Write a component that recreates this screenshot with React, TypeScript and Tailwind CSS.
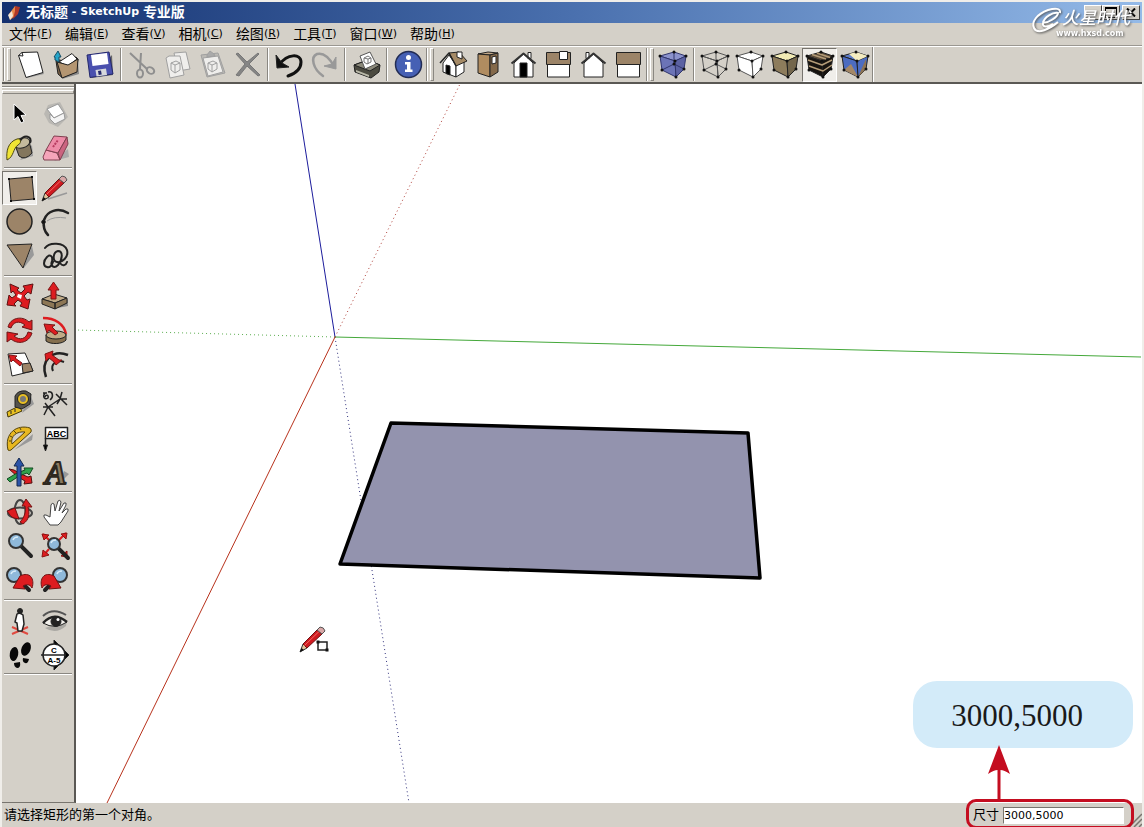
import type { ReactNode } from 'react';

type Tool = { name: string; icon: ReactNode; active?: boolean };

const BROWN = '#9c8468';
const RED = '#dd1c20';

const menus = [
  { label: '文件', hotkey: 'F' },
  { label: '编辑', hotkey: 'E' },
  { label: '查看', hotkey: 'V' },
  { label: '相机', hotkey: 'C' },
  { label: '绘图', hotkey: 'R' },
  { label: '工具', hotkey: 'T' },
  { label: '窗口', hotkey: 'W' },
  { label: '帮助', hotkey: 'H' },
];

function Icon({ children }: { children: ReactNode }) {
  return (
    <svg viewBox="0 0 30 30" className="size-[30px] shrink-0 overflow-visible" fill="none" stroke="#222" strokeWidth="1" strokeLinejoin="round" aria-hidden="true">
      {children}
    </svg>
  );
}

// The six display styles all share the same cube corners
function Cube({ top = 'none', left = 'none', right = 'none', back = false, line = '#222', children }: {
  top?: string; left?: string; right?: string; back?: boolean; line?: string; children?: ReactNode;
}) {
  return (
    <Icon>
      <path d="M2 6L16 2L28 6L17 11Z" fill={top} stroke={line} />
      <path d="M2 6L17 11L18 27L4 20Z" fill={left} stroke={line} />
      <path d="M28 6L17 11L18 27L26 19Z" fill={right} stroke={line} />
      {back && <path d="M16 2V14L4 20M16 14L26 19" stroke={line} />}
      {children}
      {[[2, 6], [16, 2], [28, 6], [17, 11], [4, 20], [18, 27], [26, 19]].map(([x, y]) => (
        <circle key={`${x}-${y}`} cx={x} cy={y} r="1.5" fill="#111" stroke="none" />
      ))}
      {back && <circle cx="16" cy="14" r="1.5" fill="#111" stroke="none" />}
    </Icon>
  );
}

function House({ chimney, door }: { chimney: number; door?: boolean }) {
  return (
    <Icon>
      <path d="M6 13L15.500 4L25 13V27H6Z" fill="#fff" />
      <rect x={chimney} y="2.500" width="3" height="6" fill="#fff" />
      {door && <rect x="12" y="13" width="7" height="14" fill="#000" />}
      <path d="M3.500 13.500L15.500 3.500L27.500 13.500" strokeWidth="2" stroke="#333" />
    </Icon>
  );
}

function Lens({ cx = 11, cy = 10, r = 7, flip = false }: { cx?: number; cy?: number; r?: number; flip?: boolean }) {
  const dir = flip ? -1 : 1;
  return (
    <>
      <path d={`M${cx + dir * r * 0.7} ${cy + r * 0.7}L${cx + dir * (r + 8)} ${cy + r + 8}`} stroke="#222" strokeWidth="4" strokeLinecap="round" />
      <circle cx={cx} cy={cy} r={r} fill="#8fb9da" stroke="#333" strokeWidth="2" />
      <path d={`M${cx - 3} ${cy - 1}Q${cx - 2} ${cy - 4} ${cx + 2} ${cy - 4}`} stroke="#d8ecf8" strokeWidth="1.500" />
    </>
  );
}

function Pencil() {
  return (
    <>
      <path d="M2 28L5 20L9 24Z" fill="#e2c49a" stroke="#333" />
      <path d="M2 28L3.500 24L6 26Z" fill="#111" stroke="none" />
      <path d="M5 20L19 6L24 10L9 24Z" fill="#cf1a20" stroke="#6c1012" />
      <path d="M6.500 21.500L21 7.500" stroke="#f26a64" />
      <path d="M19 6L22 3Q26 3 27 7L24 10Z" fill="#d9a8a8" stroke="#555" />
    </>
  );
}

const fileTools: Tool[] = [
  {
    name: '新建',
    icon: (
      <Icon>
        <path d="M5 7L12 28L29 24L27 20Z" fill="#999" stroke="none" />
        <path d="M3.500 5.500L7 2.500L22.500 2L28 22.500L11 27.500Z" fill="#fff" />
        <path d="M3.500 5.500L8 6L7 2.500" />
      </Icon>
    ),
  },
  {
    name: '打开',
    icon: (
      <Icon>
        <path d="M12 29L29 24L28 12Z" fill="#888" stroke="none" />
        <path d="M6 11L9 10L15 11L26 7L28 9L26 22L12 27.500L8 24Z" fill="#7b6248" />
        <path d="M9 12L22 3.500L27 9L18 16Z" fill="#fff" />
        <path d="M7 12L18 15L28 9L27 22L12 28Z" fill="#b49672" />
        <path d="M4 7L8 1L11 7H9V12L5 10V7Z" fill="#27a5c8" stroke="#174d66" />
      </Icon>
    ),
  },
  {
    name: '保存',
    icon: (
      <Icon>
        <path d="M6 28L28 25L27 5Z" fill="#666" stroke="none" />
        <path d="M2 5L24 2L28 24L5 27.500Z" fill="#4a50ae" stroke="#24286c" />
        <path d="M6 5L22 3L23.500 14L7.500 16Z" fill="#fff" stroke="none" />
        <path d="M10.500 20L21 18.500L22 25L11.500 26.500Z" fill="#d6d8dc" stroke="none" />
        <path d="M13 21L16 20.500L16.700 24.500L13.700 25Z" fill="#24286c" stroke="none" />
      </Icon>
    ),
  },
];

const editTools: Tool[] = [
  {
    name: '剪切',
    icon: (
      <Icon>
        <g stroke="#8f8f8f" strokeWidth="2">
          <path d="M3 3L20 19M14 3L13 19" />
          <ellipse cx="13" cy="23.500" rx="3" ry="4" />
          <ellipse cx="23.500" cy="20.500" rx="4" ry="3" transform="rotate(35 23.500 20.500)" />
        </g>
      </Icon>
    ),
  },
  {
    name: '复制',
    icon: (
      <Icon>
        <g stroke="#a0a0a0" fill="#efeeec">
          <path d="M12 3L24 2L28 19L16 21Z" />
          <path d="M4 8L7 6L18 6L22 25L8 28Z" />
          <path d="M9 13L14 11L18 13L18 20L13 23L9 20ZM9 13L13 15L18 13M13 15V23" />
        </g>
      </Icon>
    ),
  },
  {
    name: '粘贴',
    icon: (
      <Icon>
        <g stroke="#a0a0a0" fill="#efeeec">
          <path d="M4 5L21 3L28 23L10 27Z" fill="#bcbab5" />
          <path d="M6 8L21 6L26 22L11 26Z" />
          <path d="M10 5L13 1L17 4L18 6L10 7Z" fill="#aaa" />
          <path d="M11 13L16 11L20 13L20 19L15 22L11 19ZM11 13L15 15L20 13M15 15V22" />
        </g>
      </Icon>
    ),
  },
  {
    name: '删除',
    icon: (
      <Icon>
        <path d="M4 4L6 3L15 12L26 3L27 4L17 14L28 25L26 26L15 16L7 26L4 25L13 14Z" fill="#858585" stroke="#777" />
      </Icon>
    ),
  },
];

const historyTools: Tool[] = [
  {
    name: '撤销',
    icon: (
      <Icon>
        <path d="M6 14C13 4 27 3 27 12C27 20 20 24 14 26" stroke="#111" strokeWidth="3" strokeLinecap="round" />
        <path d="M2 5L3 18L15 17L8 13Z" fill="#111" />
      </Icon>
    ),
  },
  {
    name: '重做',
    icon: (
      <Icon>
        <path d="M14 26C4 19 1 7 8 4C15 2 21 9 25 16" stroke="#999" strokeWidth="2.500" strokeLinecap="round" />
        <path d="M27 7L27 19L15 16L23 14Z" fill="#999" stroke="#999" />
      </Icon>
    ),
  },
];

const printTools: Tool[] = [
  {
    name: '打印',
    icon: (
      <Icon>
        <path d="M3 15L17 10L29 15L28 22L20 28L4 22Z" fill="#4b4a40" />
        <path d="M3 15L17 10L29 15L19 21Z" fill="#8b897a" />
        <path d="M9 6L19 2L25 14L14 19Z" fill="#fff" stroke="#555" />
        <path d="M13 8L17 6L20 8L20 12L16 14L13 12ZM13 8L17 9L20 8M17 9V14" stroke="#777" />
        <path d="M5 20L18 25V27L5 22Z" fill="#b9b8a8" stroke="none" />
      </Icon>
    ),
  },
];

const infoTools: Tool[] = [
  {
    name: '模型信息',
    icon: (
      <Icon>
        <circle cx="15.500" cy="14.500" r="13" fill="#4660b4" stroke="#222c54" strokeWidth="1.500" />
        <circle cx="15.500" cy="7.500" r="2.500" fill="#fff" stroke="none" />
        <path d="M12 12H17.500V19.500H19.500V22H12V19.500H14V14.500H12Z" fill="#fff" stroke="none" />
      </Icon>
    ),
  },
];

const viewTools: Tool[] = [
  {
    name: '等轴视图',
    icon: (
      <Icon>
        <path d="M5 13L11 5L18 15V27L5 22Z" fill="#fff" />
        <path d="M18 15L26 11V22L18 27Z" fill="#fff" />
        <path d="M8 15L12 16V25L8 23.500Z" fill="#000" />
        <path d="M11 3L21 2L29 11L18 16Z" fill="#a58a66" />
        <path d="M2 13L11 3L18 16" strokeWidth="1.500" />
        <path d="M19 2H24V9L19 7Z" fill="#fff" />
      </Icon>
    ),
  },
  {
    name: '俯视图',
    icon: (
      <Icon>
        <path d="M5 4L15 2L25 3L17 5Z" fill="#c2a888" />
        <path d="M5 4L17 5V27L5 23Z" fill="#b08c60" />
        <path d="M17 5L25 3V22L17 27Z" fill="#84694a" />
        <path d="M19 7L23 6V13L19 14Z" fill="#fff" />
      </Icon>
    ),
  },
  { name: '前视图', icon: <House chimney={20} door /> },
  {
    name: '右视图',
    icon: (
      <Icon>
        <rect x="4.500" y="14" width="22" height="13" fill="#fff" />
        <rect x="3.500" y="2.500" width="24" height="12" fill={BROWN} />
        <rect x="16.500" y="1.500" width="8" height="8" fill="#fff" />
      </Icon>
    ),
  },
  { name: '后视图', icon: <House chimney={8} /> },
  {
    name: '左视图',
    icon: (
      <Icon>
        <rect x="4.500" y="14" width="22" height="13" fill="#fff" />
        <rect x="3.500" y="2.500" width="24" height="12" fill={BROWN} />
      </Icon>
    ),
  },
];

const xrayTools: Tool[] = [
  { name: 'X光模式', icon: <Cube top="#8b92cc" left="#6c74b6" right="#5c62a2" back line="#31366e" /> },
];

const styleTools: Tool[] = [
  { name: '线框', icon: <Cube back line="#555" /> },
  { name: '消隐', icon: <Cube top="#fff" left="#fff" right="#fff" line="#555" /> },
  { name: '着色', icon: <Cube top="#f1eab4" left="#8d7c5c" right="#73664c" /> },
  {
    name: '材质贴图',
    active: true,
    icon: (
      <Cube top="#5a4a38" left="#17130f" right="#17130f">
        <path d="M3 10L17 15L27 10M4 16L18 21L27 15M7 4.500L21 9M12 3L25 7.500" stroke="#b49c78" strokeWidth="1.500" />
      </Cube>
    ),
  },
  {
    name: '单色',
    icon: (
      <Cube top="#5e7cc8" left="#4c6cc0" right="#4c6cc0">
        <path d="M9 4L16 2L28 6L17 11Z" fill="#f4ecc0" stroke="none" />
        <path d="M4 20L11 14L18 27Z" fill="#a38766" stroke="none" />
        <path d="M18 27L26 9V19Z" fill="#8c7353" stroke="none" />
      </Cube>
    ),
  },
];

const paletteGroups: Tool[][] = [
  [
    {
      name: '选择',
      icon: (
        <Icon>
          <path d="M9 5V21L13 17.500L16 24L19 22.500L16 16.500L21 16Z" fill="#000" stroke="#fff" />
        </Icon>
      ),
    },
    {
      name: '制作组件',
      icon: (
        <Icon>
          <path d="M4 15L8 6L20 3L28 18L18 28L9 24Z" fill="#bab8b3" stroke="none" />
          <path d="M7 10L18 5L24 14L14 19Z" fill="#fff" stroke="#999" />
          <path d="M14 19L24 14L25 20L15 25L10 20V15Z" fill="#f4f4f4" stroke="#999" />
        </Icon>
      ),
    },
    {
      name: '材质',
      icon: (
        <Icon>
          <path d="M15 27L28 23L27 12Z" fill="#999" stroke="none" />
          <path d="M10 12L14 23Q20 28 27 20L24 8Z" fill="#83765d" />
          <ellipse cx="17" cy="10" rx="8" ry="5" fill="#c4ba9c" transform="rotate(-15 17 10)" />
          <path d="M15 8C19 1 28 3 25 10" strokeWidth="2" />
          <path d="M2 27C1 18 3 9 12 6C16 5 17 10 13 12C8 15 9 24 2 27Z" fill="#f0e434" stroke="#4e4814" />
        </Icon>
      ),
    },
    {
      name: '擦除',
      icon: (
        <Icon>
          <path d="M14 28L29 24L28 16Z" fill="#aaa" stroke="none" />
          <path d="M3 24L6 17L17 20L20 27L4 27Z" fill="#f5a5ba" stroke="#804050" />
          <path d="M6 17L14 3L27 4L18 20Z" fill="#ee8ca8" stroke="#804050" />
          <path d="M18 20L27 4L28 11L20 27Z" fill="#cb6480" stroke="#804050" />
          <path d="M13 14L18 7" stroke="#b83c60" strokeWidth="2" strokeDasharray="2 1" />
        </Icon>
      ),
    },
  ],
  [
    {
      name: '矩形',
      active: true,
      icon: (
        <Icon>
          <path d="M4 6L27 4L29 26L6 28Z" fill={BROWN} />
          <path d="M3 5h2v2H3zM26 3h2v2h-2zM28 25h2v2h-2zM5 27h2v2H5z" fill="#111" stroke="none" />
        </Icon>
      ),
    },
    {
      name: '直线',
      icon: (
        <Icon>
          <path d="M8 26L27 20" stroke="#999" strokeWidth="1.500" />
          <Pencil />
        </Icon>
      ),
    },
    { name: '圆', icon: <Icon><circle cx="14.500" cy="14.500" r="12.500" fill={BROWN} strokeWidth="1.500" /></Icon> },
    {
      name: '圆弧',
      icon: (
        <Icon>
          <path d="M7 14Q14 9 26 11" stroke="#999" />
          <path d="M28 6C18 0 7 4 4 13C3 19 4 24 8 28" strokeWidth="2.500" strokeLinecap="round" />
          <circle cx="3.500" cy="15" r="1.800" fill="#111" />
        </Icon>
      ),
    },
    {
      name: '多边形',
      icon: (
        <Icon>
          <path d="M18 28L29 14L27 5Z" fill="#999" stroke="none" />
          <path d="M2 4L27 3L18 27Z" fill={BROWN} />
        </Icon>
      ),
    },
    {
      name: '徒手画',
      icon: (
        <Icon>
          <path d="M5 7C9 1 24 1 27 9C29 16 22 22 17 21C12 20 13 11 18 10C23 10 23 18 18 24C14 28 10 25 12 20C13 15 10 13 7 16C3 20 3 25 7 26C10 27 12 24 13 21M20 22C23 26 26 24 27 21" strokeWidth="2" strokeLinecap="round" />
        </Icon>
      ),
    },
  ],
  [
    {
      name: '移动/复制',
      icon: (
        <Icon>
          <path d="M5 3L14 7L12 9L16 12L20 8L18 5L28 3L26 13L23 11L19 15L22 19L25 18L23 28L15 25L17 22L13 19L9 23L11 25L2 24L4 14L7 17L11 14L8 10L6 12Z" fill={RED} stroke="#5d1212" />
          <path d="M13 13L17 14L16 18L12 16Z" fill="#fff" stroke="none" />
        </Icon>
      ),
    },
    {
      name: '推/拉',
      icon: (
        <Icon>
          <path d="M12 28L28 25V18Z" fill="#888" stroke="none" />
          <path d="M2 18L14 13L27 17L15 22Z" fill="#c0aa86" />
          <path d="M2 18L15 22V28L2 23ZM15 22L27 17V22L15 28Z" fill="#8d7756" />
          <path d="M11 18V9H8L13.500 1L19 9H16V18Z" fill={RED} stroke="#7d1414" />
        </Icon>
      ),
    },
    {
      name: '旋转',
      icon: (
        <Icon>
          <path d="M3 12C5 3 17 0 24 7L27 5V15L17 12L20 10C14 5 8 7 6 13Z" fill={RED} stroke="#6b1616" />
          <path d="M27 18C24 28 13 30 6 24L2 27V17L13 19L9 21C15 26 21 24 23 17Z" fill={RED} stroke="#6b1616" />
        </Icon>
      ),
    },
    {
      name: '路径跟随',
      icon: (
        <Icon>
          <path d="M3 3C15 3 24 9 26 19" stroke={RED} strokeWidth="2.500" />
          <path d="M6 20V26C11 30 23 29 26 25V19Z" fill="#86704f" />
          <ellipse cx="16" cy="20" rx="10" ry="4" fill="#c0aa86" />
          <path d="M4 9L15 10L12 12L18 18L15 20L9 15L7 18Z" fill={RED} stroke="#7d1414" />
        </Icon>
      ),
    },
    {
      name: '缩放',
      icon: (
        <Icon>
          <path d="M3 5L20 4L28 22L7 27Z" fill="#fff" />
          <path d="M17 15L25 14L28 22L18 24Z" fill={BROWN} />
          <path d="M4 6L12 7L10 9L17 14L15 17L8 11L6 13Z" fill={RED} stroke="#7d1414" />
        </Icon>
      ),
    },
    {
      name: '偏移复制',
      icon: (
        <Icon>
          <path d="M28 6C13 0 0 11 6 28" strokeWidth="2.500" />
          <path d="M24 13C17 10 10 15 13 22" strokeWidth="2" />
          <path d="M5 5L13 2L12 6L19 11H22L16 16L14 13L9 9L6 12Z" fill={RED} stroke="#7d1414" />
        </Icon>
      ),
    },
  ],
  [
    {
      name: '测量',
      icon: (
        <Icon>
          <path d="M17 24L29 15L25 5Z" fill="#999" stroke="none" />
          <path d="M2 23L14 17L17 22L3 28Z" fill="#e8c020" stroke="#443808" />
          <path d="M6 22V25M10 20V23" />
          <path d="M10 7Q13 1 21 2L26 5L25 15L17 20L10 18Z" fill="#55534c" />
          <circle cx="18" cy="10" r="5.500" fill="#e8bf24" />
          <circle cx="18" cy="10" r="3" fill="#777" stroke="none" />
        </Icon>
      ),
    },
    {
      name: '尺寸标注',
      icon: (
        <Icon>
          <path d="M8 18L20 10M3 18H13M5 14L15 27M8 18L4 26M16 5L27 16M20 10H27M20 10L22 3M20 10L17 15" strokeWidth="1.500" />
          <path d="M3 4H7M5 4C2 8 5 11 8 9C9 6 6 5 5 8M8 3C13 2 14 8 10 11" strokeWidth="1.500" />
        </Icon>
      ),
    },
    {
      name: '量角器',
      icon: (
        <Icon>
          <path d="M9 27L28 11L27 17Z" fill="#999" stroke="none" />
          <path d="M3 27C-1 10 12 1 25 5Q27 7 26 9L6 27Q4 28 3 27Z" fill="#e8b820" stroke="#54430c" />
          <path d="M7 21C5 13 12 8 20 9Z" fill="#d4d0c8" stroke="#54430c" />
          <path d="M4 18H6M5 13L7 14M9 8L11 10M15 5L16 7" stroke="#54430c" />
        </Icon>
      ),
    },
    {
      name: '文字',
      icon: (
        <Icon>
          <rect x="5.500" y="4.500" width="22" height="11" fill="#fff" strokeWidth="1.500" />
          <text x="16.500" y="13.500" textAnchor="middle" fontFamily="Liberation Sans, sans-serif" fontWeight="bold" fontSize="9" fill="#000" stroke="none">ABC</text>
          <path d="M5.500 15V26" strokeWidth="1.500" />
          <path d="M3.500 22L5.500 28L7.500 22Z" fill="#000" />
        </Icon>
      ),
    },
    {
      name: '坐标轴',
      icon: (
        <Icon>
          <path d="M4 12L9 13L16 17L23 20L26 19L27 26L19 27L20 24L13 20Z" fill={RED} stroke="#521010" />
          <path d="M2 22L12 16L20 13L19 11L28 11L24 18L22 16L14 19L5 25Z" fill="#30a14c" stroke="#124c20" />
          <path d="M12 29V9H9L14 1L19 9H16V29Z" fill="#2c54a8" stroke="#14284e" />
        </Icon>
      ),
    },
    {
      name: '三维文字',
      icon: (
        <Icon>
          <path d="M20 26L29 17L24 14Z" fill="#999" stroke="none" />
          <g fontFamily="Liberation Serif, serif" fontWeight="bold" fontStyle="italic" fontSize="33" textAnchor="middle">
            <text x="16" y="27" fill="#8c7c60" stroke="#2e2820" strokeWidth="2">A</text>
          </g>
        </Icon>
      ),
    },
  ],
  [
    {
      name: '转动',
      icon: (
        <Icon>
          <ellipse cx="15" cy="16" rx="12" ry="5.500" stroke="#444" strokeWidth="2" />
          <ellipse cx="15" cy="15" rx="5.500" ry="12" stroke="#444" strokeWidth="2" />
          <path d="M2 14L10 11L14 22L9 21C6 20 5 18 2 14Z" fill={RED} stroke="#701414" />
          <path d="M17 9L21 2L27 10H23C25 17 24 23 18 27L15 25C20 20 21 14 20 9Z" fill={RED} stroke="#701414" />
        </Icon>
      ),
    },
    {
      name: '平移',
      icon: (
        <Icon>
          <path d="M10 28L4 20Q3 17 6 18L10 20L11 8Q12 5 14 7L15 14L18 4Q20 2 21 5L19 14L24 6Q27 5 26 8L22 16L26 12Q29 11 28 14L21 25L18 28Z" fill="#fff" stroke="#444" />
        </Icon>
      ),
    },
    { name: '缩放视图', icon: <Icon><Lens /></Icon> },
    {
      name: '充满视窗',
      icon: (
        <Icon>
          <path d="M10 10L3 3M19 9L26 2M9 18L3 25" stroke={RED} strokeWidth="2" />
          <path d="M2 3L9 4L4 9ZM21 3L27 2L26 8ZM3 19L9 24L2 26ZM21 25L27 20V26Z" fill={RED} stroke="#8c1414" />
          <Lens cx={14} cy={13} r={6} />
        </Icon>
      ),
    },
    {
      name: '上一视图',
      icon: (
        <Icon>
          <Lens cx={9} cy={10} />
          <path d="M8 23L15 11C25 6 30 14 27 23C25 19 21 19 18 21L20 24Z" fill={RED} stroke="#701414" />
        </Icon>
      ),
    },
    {
      name: '下一视图',
      icon: (
        <Icon>
          <Lens cx={20} cy={10} flip />
          <path d="M21 23L14 11C4 6 -1 14 2 23C4 19 8 19 11 21L9 24Z" fill={RED} stroke="#701414" />
        </Icon>
      ),
    },
  ],
  [
    {
      name: '相机位置',
      icon: (
        <Icon>
          <path d="M7 22L23 29M7 29L23 22" stroke="#e04a40" strokeWidth="2" />
          <circle cx="15" cy="6" r="2.500" fill="#222" />
          <path d="M12 9Q15 7 18 10L19 19L17 26H13L12 18L10 17Z" fill="#fff" strokeWidth="1.500" />
        </Icon>
      ),
    },
    {
      name: '绕轴旋转',
      icon: (
        <Icon>
          <path d="M5 23Q16 30 26 21L27 16Z" fill="#aaa8a3" stroke="none" />
          <path d="M3 11Q13 2 26 10" stroke="#555" strokeWidth="2" />
          <path d="M3 18Q14 6 27 17Q15 25 3 18Z" fill="#f1efea" />
          <path d="M3 18Q14 6 27 17" strokeWidth="2.500" />
          <circle cx="16" cy="16.500" r="5" fill="#222" />
          <circle cx="18" cy="14.500" r="1.500" fill="#fff" stroke="none" />
        </Icon>
      ),
    },
    {
      name: '漫游',
      icon: (
        <Icon>
          <g fill="#080808" stroke="none">
            <ellipse cx="9" cy="15" rx="4.200" ry="7" transform="rotate(10 9 15)" />
            <path d="M9 24L15 23Q16 29 12 29Q9 28 9 24Z" />
            <ellipse cx="21" cy="10" rx="4.500" ry="7" transform="rotate(22 21 10)" />
            <path d="M18 19L24 20Q23 25 20 24Q17 23 18 19Z" />
          </g>
        </Icon>
      ),
    },
    {
      name: '剖面',
      icon: (
        <Icon>
          <path d="M14 1L29 16L14 31Z" fill="#000" />
          <circle cx="14" cy="16" r="11" fill="#fff" strokeWidth="1.500" />
          <path d="M1 16H26" strokeWidth="1.500" />
          <g fontFamily="Liberation Sans, sans-serif" fontWeight="bold" fontSize="8" fill="#000" stroke="none" textAnchor="middle">
            <text x="14" y="13.500">C</text>
            <text x="14" y="24">A-5</text>
          </g>
        </Icon>
      ),
    },
  ],
];

function ToolButton({ name, icon, active }: Tool) {
  return (
    <button
      type="button"
      aria-label={name}
      aria-pressed={active}
      className={
        active
          ? 'flex h-[34px] w-[35px] items-center justify-center border border-t-[#77746e] border-l-[#77746e] border-r-white border-b-white bg-[#f0eeea]'
          : 'flex h-[34px] w-[35px] items-center justify-center'
      }
    >
      {icon}
    </button>
  );
}

function ToolRow({ tools }: { tools: Tool[] }) {
  return <div className="flex items-end">{tools.map((tool) => <ToolButton key={tool.name} {...tool} />)}</div>;
}

function Divider() {
  return (
    <div className="flex w-[7px] shrink-0 justify-center py-px">
      <div className="w-[2px] border-l border-r border-l-[#8a8781] border-r-white" />
    </div>
  );
}

function Grip() {
  return (
    <div className="flex w-[10px] shrink-0 items-stretch justify-center gap-[2px] py-px">
      <div className="w-[2px] border-l border-r border-l-[#8a8781] border-r-white" />
      <div className="w-[4px] border border-white border-r-[#8a8781] border-b-[#8a8781]" />
    </div>
  );
}

function TitleBar() {
  return (
    <header className="relative flex h-[21px] shrink-0 items-center bg-linear-to-r from-[#14306f] via-[#4a70ae] to-[#94bae8] pl-1 pr-[2px]">
      <svg viewBox="0 0 16 16" className="size-4" aria-hidden="true">
        <path d="M3 9L9 1L12 3L8 12L4 15Z" fill="#e88848" />
        <path d="M9 1L14 2L12 9L7 14L9 6Z" fill="#b03828" />
        <path d="M2 10L6 6L7 11L4 15Z" fill="#f4e6d4" />
      </svg>
      <h1 className="ml-1 flex items-center text-[14px] font-bold whitespace-pre text-white">
        无标题<span className="text-[11px]"> - SketchUp </span>专业版
      </h1>
      <div className="ml-auto flex">
        <button type="button" aria-label="最小化" className="flex h-[15px] w-[18px] items-end justify-start border border-white border-r-[#404040] border-b-[#404040] bg-[#d4d0c8] p-[2px]">
          <span className="h-[2px] w-2 bg-black" />
        </button>
        <button type="button" aria-label="最大化" className="flex h-[15px] w-[18px] items-center justify-center border border-white border-r-[#404040] border-b-[#404040] bg-[#d4d0c8]">
          <span className="h-[11px] w-3 border border-t-2 border-black" />
        </button>
        <button type="button" aria-label="关闭" className="ml-[2px] flex h-[15px] w-[18px] items-center justify-center border border-white border-r-[#404040] border-b-[#404040] bg-[#d4d0c8]">
          <svg viewBox="0 0 10 9" className="h-[9px] w-[10px]" stroke="#000" strokeWidth="2">
            <path d="M1 0.500L9 8.500M9 0.500L1 8.500" />
          </svg>
        </button>
      </div>

      {/* Site mark over the window buttons */}
      <svg viewBox="0 0 112 32" className="absolute top-1 right-0 z-10 h-8 w-28 drop-shadow-[1px_1px_1px_#555]" aria-hidden="true">
        <path d="M30 7C31 2 25 2 18 4C7 8 1 16 4 22C7 29 20 23 28 16M13 16C17 18 28 11 28 7C23 6 14 11 13 17C12 21 17 22 23 18" fill="none" stroke="#fff" strokeWidth="2" />
        <text x="32" y="18" fontFamily="Noto Sans CJK SC, sans-serif" fontWeight="500" fontStyle="italic" fontSize="17" fill="#fff">火星时代</text>
        <text x="26" y="30" fontFamily="DejaVu Sans, sans-serif" fontWeight="bold" fontSize="8" fill="#fff">www.hxsd.com</text>
      </svg>
    </header>
  );
}

function Palette() {
  return (
    <aside className="w-[74px] shrink-0 border-r-2 border-b border-r-[#5a5854] border-b-[#77746e]">
      <div className="flex h-[13px] flex-col gap-[2px] pt-[2px]">
        <div className="h-[2px] border-t border-b border-t-[#8a8781] border-b-white" />
        <div className="h-[4px] border border-white border-r-[#8a8781] border-b-[#8a8781]" />
      </div>
      {paletteGroups.map((group) => (
        <div key={group[0].name}>
          <div className="grid grid-cols-[35px_35px]">
            {group.map((tool) => <ToolButton key={tool.name} {...tool} />)}
          </div>
          <div className="flex h-[6px] items-center px-[2px]">
            <div className="h-[2px] w-full border-t border-b border-t-[#8a8781] border-b-white" />
          </div>
        </div>
      ))}
    </aside>
  );
}

function Viewport() {
  return (
    <main className="relative min-w-0 flex-1 overflow-hidden bg-white">
      <svg viewBox="76 84 1066 719" preserveAspectRatio="xMinYMin slice" className="absolute inset-0 size-full" fill="none" aria-label="模型">
        {/* Axes, dotted on the negative side */}
        <path d="M335 337L295 84" stroke="#1c1c9c" />
        <path d="M335 337L409 803" stroke="#30307c" strokeDasharray="1 3" />
        <path d="M335 337L1141 357" stroke="#44a83a" />
        <path d="M335 337L76 330" stroke="#5cae50" strokeDasharray="1 3" />
        <path d="M335 337L107 803" stroke="#b8321c" />
        <path d="M335 337L460 84" stroke="#b04038" strokeDasharray="1 3" />
        <path d="M391 423L748 433L760 578L340 564Z" fill="#9393ae" stroke="#000" strokeWidth="3.500" strokeLinejoin="round" />
        {/* Pencil cursor with the rectangle hint */}
        <g transform="translate(298 624)">
          <Pencil />
          <path d="M20 18H29V26H20Z" stroke="#222" strokeWidth="1.500" />
          <path d="M18.500 16.500h3v3h-3zM27.500 24.500h3v3h-3z" fill="#111" />
        </g>
      </svg>
    </main>
  );
}

function StatusBar() {
  return (
    <footer className="relative flex h-6 shrink-0 items-center pr-[18px] pl-[2px] text-[13px] text-black">
      <p>请选择矩形的第一个对角。</p>
      <label htmlFor="dimensions" className="mr-1 ml-auto">尺寸</label>
      <input
        id="dimensions"
        defaultValue="3000,5000"
        className="h-[17px] w-[121px] border border-t-[#77746e] border-l-[#77746e] border-r-white border-b-white bg-white text-[11px] outline-none"
      />
      <svg viewBox="0 0 14 14" className="absolute right-0 bottom-0 size-[14px]" stroke="#77746e" strokeWidth="1.500" aria-hidden="true">
        <path d="M1 14L14 1M6 14L14 6M11 14L14 11" />
      </svg>

      {/* Note pointing at the dimension box */}
      <div className="pointer-events-none absolute -top-1 right-2 h-[30px] w-[168px] rounded-[10px] border-3 border-[#c40d20]" />
      <svg viewBox="0 0 22 56" className="absolute right-[132px] bottom-[26px] z-10 h-14 w-[22px]" fill="#c40d20" aria-hidden="true">
        <path d="M11 0L22 29Q16 25 12.500 25V56H9.500V25Q6 25 0 29Z" />
      </svg>
      <div className="absolute right-[9px] bottom-[79px] flex h-[67px] w-[220px] items-center justify-center rounded-[24px] bg-[#d3ebf9] pt-1 pr-3 font-['Liberation_Serif',serif] text-[31px] text-[#1a1a1a]">
        3000,5000
      </div>
    </footer>
  );
}

export default function App() {
  return (
    <div className="flex h-screen flex-col overflow-hidden border-x-2 border-t-2 border-[#f0eeea] bg-[#d4d0c8] font-['DejaVu_Sans','Noto_Sans_CJK_SC',sans-serif]">
      <TitleBar />

      <nav className="flex h-[22px] shrink-0 items-center gap-[13px] pl-[7px]">
        {menus.map(({ label, hotkey }) => (
          <button key={hotkey} type="button" className="flex items-center text-[14px] text-black">
            {label}
            <span className="text-[11px]">(<u>{hotkey}</u>)</span>
          </button>
        ))}
      </nav>

      <div className="flex h-[39px] shrink-0 border-t border-b-2 border-t-[#9a9791] border-b-[#5a5854]">
        <div className="flex w-full border-t border-white">
          <Grip />
          <ToolRow tools={fileTools} />
          <Divider />
          <ToolRow tools={editTools} />
          <Divider />
          <ToolRow tools={historyTools} />
          <Divider />
          <ToolRow tools={printTools} />
          <Divider />
          <ToolRow tools={infoTools} />
          <Grip />
          <ToolRow tools={viewTools} />
          <Grip />
          <ToolRow tools={xrayTools} />
          <Divider />
          <ToolRow tools={styleTools} />
          <div className="w-[2px] border-l border-r border-l-[#8a8781] border-r-white" />
        </div>
      </div>

      <div className="flex min-h-0 flex-1">
        <Palette />
        <Viewport />
      </div>

      <StatusBar />
    </div>
  );
}
